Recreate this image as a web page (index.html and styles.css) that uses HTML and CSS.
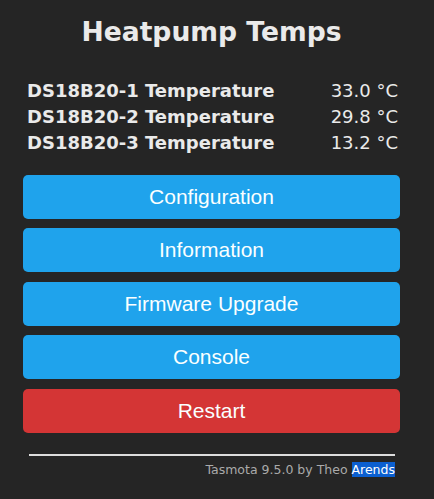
FILE: index.html
```html
<!DOCTYPE html>
<html lang="en">
<head>
  <meta charset="UTF-8" />
  <meta name="viewport" content="width=device-width, initial-scale=1.0" />
  <title>Heatpump Temps</title>
  <link rel="stylesheet" href="styles.css">
</head>
<body>

  <div class="main">
    <h2 class="title">Heatpump Temps</h2>

    <table class="sensors">
      <tr><th>DS18B20-1 Temperature</th><td>33.0 °C</td></tr>
      <tr><th>DS18B20-2 Temperature</th><td>29.8 °C</td></tr>
      <tr><th>DS18B20-3 Temperature</th><td>13.2 °C</td></tr>
    </table>

    <div class="buttons">
      <button>Configuration</button>
      <button>Information</button>
      <button>Firmware Upgrade</button>
      <button>Console</button>
      <button class="danger">Restart</button>
    </div>

    <div class="footer">
      <hr>
      <div class="credit">Tasmota 9.5.0 by Theo <span class="mark">Arends</span></div>
    </div>
  </div>

</body>
</html>
```

FILE: styles.css
```css
body {
  margin: 0;
  background-color: #252525;
  color: #eaeaea;
  font-family: "DejaVu Sans", Verdana, sans-serif;
}

.main {
  width: 377px;
  margin-left: 23px;
  padding-top: 16px;
}

.title {
  margin: 0;
  text-align: center;
  font-size: 26.6px;
  font-weight: bold;
  line-height: 32px;
}

.sensors {
  width: 100%;
  margin-top: 30px;
  border-collapse: collapse;
  font-size: 18px;
}

.sensors th {
  text-align: left;
  font-weight: bold;
  padding: 0 0 0 4px;
  line-height: 26px;
}

.sensors td {
  text-align: right;
  padding: 0 2px 0 0;
  line-height: 26px;
}

.buttons {
  display: flex;
  flex-direction: column;
  gap: 9.4px;
  margin-top: 19px;
}

.buttons button {
  height: 44px;
  border: 0;
  border-radius: 5px;
  background-color: #1fa3ec;
  color: #faffff;
  font-family: "Liberation Sans", Arial, sans-serif;
  font-size: 21px;
  cursor: pointer;
}

.buttons .danger {
  background-color: #d43535;
}

.footer {
  margin: 21px 5px 0 6px;
}

.footer hr {
  margin: 0;
  border: 0;
  height: 2px;
  background-color: #dddddd;
}

.credit {
  text-align: right;
  font-size: 12.5px;
  color: #aaaaaa;
  margin-top: 6px;
}

.mark {
  background-color: #0b5fd0;
  color: #ffffff;
}
```
